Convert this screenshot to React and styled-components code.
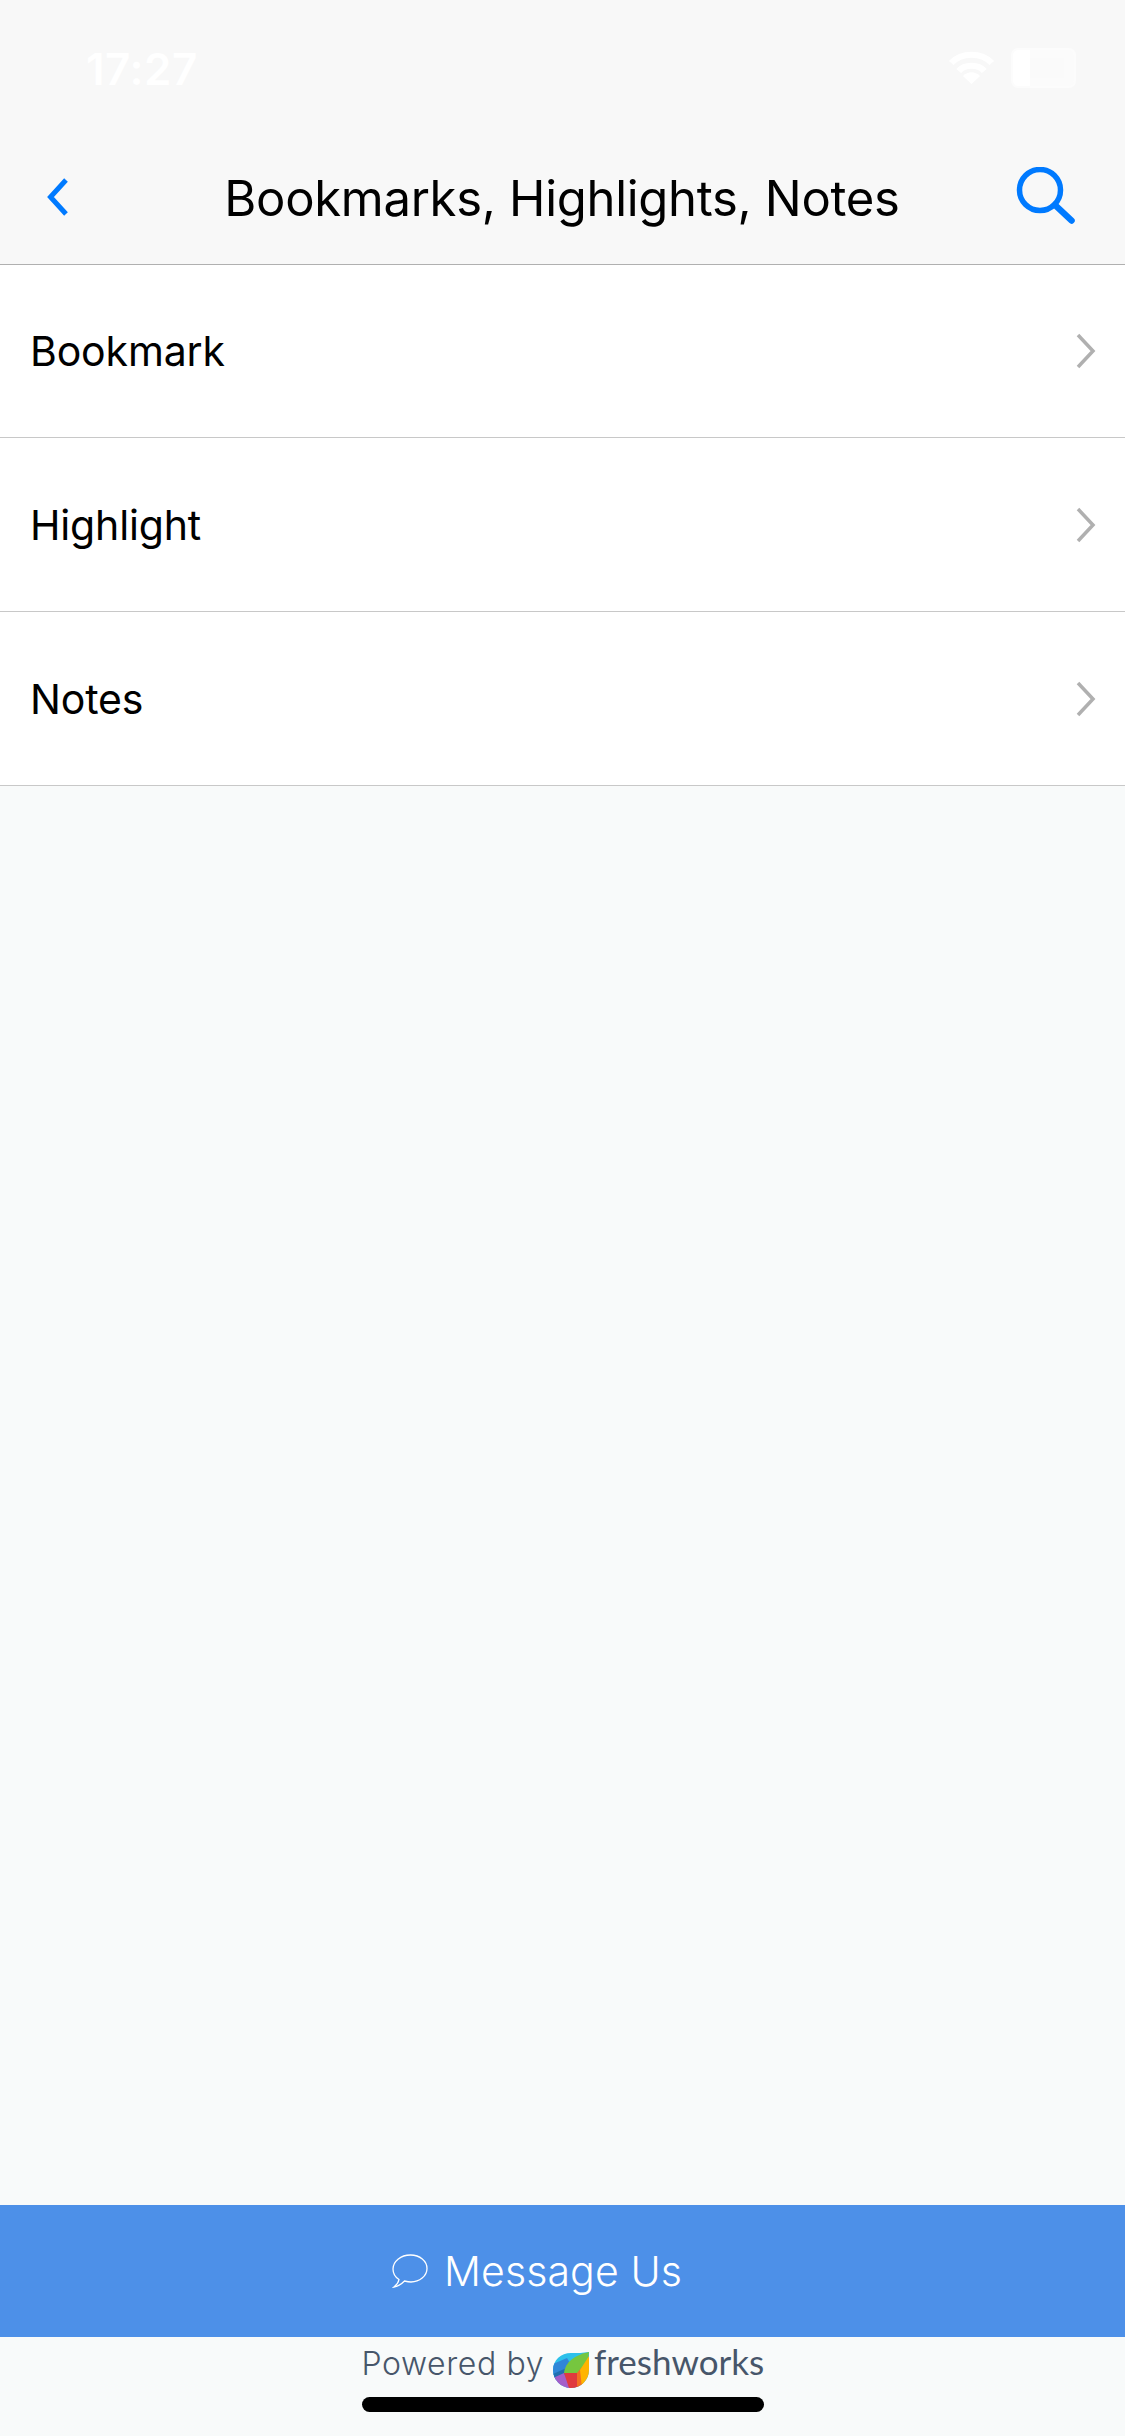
import React from 'react';
import styled, { createGlobalStyle } from 'styled-components';

const items = ['Bookmark', 'Highlight', 'Notes'];

export default function App() {
    return (
        <>
            <GlobalStyle />
            <Page>
                <TopBar>
                    <StatusBar>
                        <Clock>17:27</Clock>
                        <StatusIcons>
                            <WifiIcon />
                            <BatteryIcon />
                        </StatusIcons>
                    </StatusBar>
                    <NavBar>
                        <BackIcon />
                        <Title>Bookmarks, Highlights, Notes</Title>
                        <SearchIcon />
                    </NavBar>
                </TopBar>
                <List>
                    {items.map((item) => (
                        <Row key={item}>
                            <RowLabel>{item}</RowLabel>
                            <ChevronIcon />
                        </Row>
                    ))}
                </List>
                <Spacer />
                <MessageButton>
                    <BubbleIcon />
                    <MessageText>Message Us</MessageText>
                </MessageButton>
                <Footer>
                    <PoweredRow>
                        <PoweredText>Powered by</PoweredText>
                        <LeafLogo />
                        <BrandText>freshworks</BrandText>
                    </PoweredRow>
                    <HomeIndicator />
                </Footer>
            </Page>
        </>
    );
}

function WifiIcon() {
    return (
        <svg width="47" height="34" viewBox="0 0 44 34" preserveAspectRatio="none" fill="none" stroke="#fff" strokeWidth="6">
            <path d="M3 12 C13 1 31 1 41 12" />
            <path d="M10 20 C16 13 28 13 34 20" />
            <path d="M22 33 L14 25 C19 20 25 20 30 25 Z" fill="#fff" stroke="none" />
        </svg>
    );
}

function BatteryIcon() {
    return (
        <svg width="68" height="40" viewBox="0 0 68 40">
            <path d="M9 1 H58 Q65 1 65 8 V32 Q65 39 58 39 H9 Q2 39 2 32 V8 Q2 1 9 1 Z" fill="#fbfbfb" stroke="#fcfcfc" strokeWidth="2" />
            <path d="M9 2 H20 V38 H9 Q3 38 3 32 V8 Q3 2 9 2 Z" fill="#fff" />
            <path d="M20 10 H54 V30 H20 Z" fill="#fafafa" />
        </svg>
    );
}

function BackIcon() {
    return (
        <BackSvg width="22" height="40" viewBox="0 0 22 40" fill="none" stroke="#007aff" strokeWidth="5">
            <path d="M19 3 L3.500 20 L19 37" />
        </BackSvg>
    );
}

function SearchIcon() {
    return (
        <SearchSvg width="62" height="62" viewBox="0 0 62 62" fill="none" stroke="#007aff" strokeWidth="5.5">
            <circle cx="25" cy="23" r="20.500" />
            <path d="M40 38 L56.500 53.500" strokeWidth="6.500" strokeLinecap="round" />
        </SearchSvg>
    );
}

function ChevronIcon() {
    return (
        <ChevronSvg width="22" height="36" viewBox="0 0 22 36" fill="none" stroke="#b0b0b0" strokeWidth="3.5">
            <path d="M3 2 L18 18 L3 34" />
        </ChevronSvg>
    );
}

function BubbleIcon() {
    return (
        <svg width="36" height="34" viewBox="0 0 36 34" fill="none" stroke="#fff" strokeWidth="1.3">
            <path d="M7 25.500 C3 23 1 19 1 15 C1 7.500 8.500 1 18.500 1 C28 1 35 7 35 14.500 C35 22 27.500 28 19 28 C16.500 28 14.500 27.500 12.500 27 C10 29.500 6 32.500 2 33 C4.500 31 6.500 28.500 7 25.500 Z" />
        </svg>
    );
}

function LeafLogo() {
    return (
        <LeafSvg width="36" height="36" viewBox="0 0 36 36">
            <defs>
                <clipPath id="leaf-shape">
                    <path d="M18 36 C8 36 0 28 0 18 C0 8 8 1 18 1 C24 1 30 1 36 0 C36 6 36 12 36 18 C36 28 28 36 18 36 Z" />
                </clipPath>
            </defs>
            <g clipPath="url(#leaf-shape)">
                <rect width="36" height="36" fill="#2cc0ea" />
                <path d="M0 12 L14 6 L20 16 L0 26 Z" fill="#2f86d8" />
                <path d="M0 22 L18 14 L12 24 L2 28 Z" fill="#1f6fb0" />
                <path d="M36 0 C22 3 12 10 11 21 L17 24 C28 22 35 12 36 0 Z" fill="#76c63f" />
                <path d="M0 26 L11 21 L18 36 H2 Z" fill="#a45ec9" />
                <path d="M11 21 L24 21 L27 36 H16 Z" fill="#e0393e" />
                <path d="M24 21 L29 15 L30 36 H24 Z" fill="#f36f21" />
                <path d="M36 4 L27 18 L29 36 H36 Z" fill="#ffb400" />
            </g>
        </LeafSvg>
    );
}

const GlobalStyle = createGlobalStyle`
    html, body {
        margin: 0;
        padding: 0;
        background: #f8fafa;
    }
`;

const Page = styled.div`
    width: 1125px;
    height: 2436px;
    display: flex;
    flex-direction: column;
    overflow: hidden;
    background: #f8fafa;
    font-family: Inter, "Liberation Sans", sans-serif;
`;

const TopBar = styled.header`
    height: 264px;
    flex-shrink: 0;
    display: flex;
    flex-direction: column;
    background: #f8f8f8;
    border-bottom: 1px solid #b0b0b0;
`;

const StatusBar = styled.div`
    height: 136px;
    padding: 45px 47px 0 86px;
    box-sizing: border-box;
    display: flex;
    justify-content: space-between;
    align-items: flex-start;
`;

const Clock = styled.span`
    font-size: 44px;
    line-height: 48px;
    font-weight: 600;
    letter-spacing: 0.500px;
    color: #ffffff;
`;

const StatusIcons = styled.div`
    display: flex;
    align-items: center;
    gap: 15px;
    padding-top: 3px;
`;

const NavBar = styled.nav`
    flex: 1;
    display: grid;
    grid-template-columns: 1fr auto 1fr;
    align-items: start;
    padding: 0 48px 0 47px;
`;

const BackSvg = styled.svg`
    margin-top: 41px;
`;

const SearchSvg = styled.svg`
    margin-top: 31px;
    justify-self: end;
`;

const Title = styled.h1`
    margin: 28px 0 0;
    font-size: 49px;
    line-height: 70px;
    font-weight: 400;
    color: #000;
    white-space: nowrap;
    letter-spacing: -0.300px;
`;

const List = styled.section`
    display: flex;
    flex-direction: column;
    flex-shrink: 0;
`;

const Row = styled.div`
    height: 174px;
    box-sizing: border-box;
    padding: 0 28px 0 30px;
    display: flex;
    align-items: center;
    justify-content: space-between;
    background: #fff;
    border-bottom: 1px solid #c8c8c8;

    &:first-child {
        height: 173px;
    }
`;

const RowLabel = styled.span`
    font-size: 41px;
    letter-spacing: -0.150px;
    color: #000;
`;

const ChevronSvg = styled.svg`
    display: block;
`;

const Spacer = styled.div`
    flex: 1;
`;

const MessageButton = styled.div`
    height: 132px;
    flex-shrink: 0;
    padding-right: 51px;
    box-sizing: border-box;
    display: flex;
    align-items: center;
    justify-content: center;
    gap: 16px;
    background: #4d90e8;
`;

const MessageText = styled.span`
    font-size: 41px;
    font-weight: 300;
    letter-spacing: 0.100px;
    color: #fff;
`;

const Footer = styled.footer`
    height: 99px;
    flex-shrink: 0;
    display: flex;
    flex-direction: column;
    align-items: center;
    background: #f8fafa;
`;

const PoweredRow = styled.div`
    width: 402px;
    height: 60px;
    display: flex;
    align-items: flex-start;
    color: #47566a;
`;

const PoweredText = styled.span`
    margin-top: 7px;
    flex-shrink: 0;
    font-size: 32px;
    line-height: 40px;
    font-weight: 300;
    letter-spacing: 0.600px;
    white-space: nowrap;
`;

const LeafSvg = styled.svg`
    margin: 15px 5px 0 9px;
    flex-shrink: 0;
`;

const BrandText = styled.span`
    margin-top: 4px;
    flex-shrink: 0;
    font-family: Lato, Inter, sans-serif;
    font-size: 35px;
    line-height: 40px;
    white-space: nowrap;
`;

const HomeIndicator = styled.div`
    width: 402px;
    height: 15px;
    border-radius: 8px;
    background: #000;
`;
